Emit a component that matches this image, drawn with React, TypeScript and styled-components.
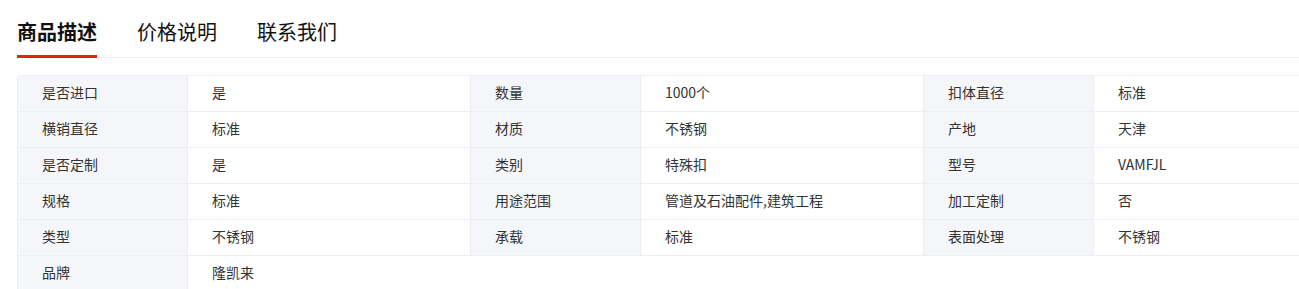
import styled, { createGlobalStyle } from 'styled-components';

const GlobalStyle = createGlobalStyle`
  body {
    margin: 0;
    background: #fff;
    font-family: "Noto Sans CJK SC", "Liberation Sans", sans-serif;
    color: #333;
    overflow: hidden;
  }
`;

const Page = styled.div`
  padding-left: 17px;
  overflow: hidden;
`;

const TabBar = styled.div`
  display: flex;
  gap: 40px;
  border-bottom: 1px solid #ececec;
`;

const Tab = styled.div<{ $active?: boolean }>`
  padding-top: 18px;
  padding-bottom: 9px;
  font-size: 20px;
  line-height: 28px;
  font-weight: ${(p) => (p.$active ? 700 : 400)};
  color: #111;
  border-bottom: 3px solid ${(p) => (p.$active ? '#e4201a' : 'transparent')};
  margin-bottom: -1px;
`;

const Table = styled.table`
  margin-top: 17px;
  border-collapse: separate;
  border-spacing: 0;
  table-layout: fixed;
  width: 1359px;
  font-size: 14px;
  border-top: 1px solid #ebedf0;
  border-left: 1px solid #ebedf0;
  border-top-left-radius: 4px;
  overflow: hidden;
`;

const Col = styled.col<{ $label?: boolean }>`
  width: ${(p) => (p.$label ? '170px' : '283px')};
`;

const Cell = styled.td<{ $label?: boolean }>`
  height: 36px;
  padding: 0 0 4px 24px;
  box-sizing: border-box;
  background: ${(p) => (p.$label ? '#f5f6fa' : '#fff')};
  color: #333;
  border-right: 1px solid #ebedf0;
  border-bottom: 1px solid #ebedf0;
  white-space: nowrap;
`;

const rows: [string, string][][] = [
  [['是否进口', '是'], ['数量', '1000个'], ['扣体直径', '标准']],
  [['横销直径', '标准'], ['材质', '不锈钢'], ['产地', '天津']],
  [['是否定制', '是'], ['类别', '特殊扣'], ['型号', 'VAMFJL']],
  [['规格', '标准'], ['用途范围', '管道及石油配件,建筑工程'], ['加工定制', '否']],
  [['类型', '不锈钢'], ['承载', '标准'], ['表面处理', '不锈钢']],
  [['品牌', '隆凯来']],
];

export default function App() {
  return (
    <Page>
      <GlobalStyle />
      <TabBar>
        <Tab $active>商品描述</Tab>
        <Tab>价格说明</Tab>
        <Tab>联系我们</Tab>
      </TabBar>
      <Table>
        <colgroup>
          {[0, 1, 2].map((i) => [
            <Col key={i + 'k'} $label />,
            <Col key={i + 'v'} />,
          ])}
        </colgroup>
        <tbody>
          {rows.map((row, i) => (
            <tr key={i}>
              {row.map(([k, v]) => [
                <Cell key={k + 'k'} $label>{k}</Cell>,
                <Cell key={k + 'v'} colSpan={row.length === 1 ? 5 : 1}>
                  {v}
                </Cell>,
              ])}
            </tr>
          ))}
        </tbody>
      </Table>
    </Page>
  );
}
